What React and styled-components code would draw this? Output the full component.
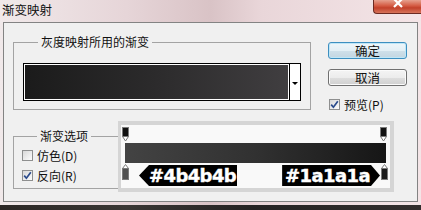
import React from 'react';
import styled, { createGlobalStyle } from 'styled-components';

const Global = createGlobalStyle`
  html, body { margin: 0; padding: 0; background: #2a2a2a; }
  body { font-family: "Noto Sans CJK SC", "Noto Sans", sans-serif; }
  * { box-sizing: border-box; }
`;

const Window = styled.div`
  width: 421px;
  height: 210px;
  overflow: hidden;
  display: flex;
  flex-direction: column;
  background: linear-gradient(90deg, #f1e9ea 0%, #e6d5d8 30%, #d9c3c6 50%, #e9d6d9 62%, #f4e5e7 100%);
`;

const TitleBar = styled.div`
  height: 22px;
  display: flex;
  justify-content: space-between;
  align-items: flex-start;
`;

const TitleText = styled.div`
  padding-left: 2px;
  font-size: 12.5px;
  line-height: 20px;
  color: #111;
`;

const CloseButton = styled.div`
  width: 48px;
  height: 14px;
  border: 1px solid #6c2a22;
  border-top: none;
  border-right: none;
  border-radius: 0 0 0 4px;
  background: linear-gradient(180deg, #e6a08e 0%, #d45a42 45%, #c2412b 60%, #d7735a 100%);
  display: flex;
  justify-content: center;
`;

const Client = styled.div`
  margin: 0 3px;
  height: 180px;
  border: 1px solid #838383;
  background: #f0f0f0;
  padding-left: 9px;
  display: flex;
  flex-direction: column;
`;

const Dark = styled.div`
  margin-top: 3px;
  flex: 1;
  background: linear-gradient(90deg, #2b2624 0%, #3a3533 30%, #242222 60%, #332e2d 100%);
`;

const TopRow = styled.div`
  height: 87px;
  display: flex;
  align-items: flex-start;
`;

const BottomRow = styled.div`
  margin-top: 11px;
  display: flex;
  align-items: flex-start;
`;

const GroupBox = styled.fieldset`
  margin: ${p => p.$top}px 0 0 0;
  width: ${p => p.$w}px;
  height: ${p => p.$h}px;
  padding: ${p => p.$pad};
  border: 1px solid #a3a3a3;
  ${p => p.$openRight && 'border-right: none;'}
  min-width: 0;
`;

const Legend = styled.legend`
  margin-left: 15px;
  padding: 0 3px;
  font-size: 12px;
  line-height: 14px;
  color: #111;
`;

const GradientField = styled.div`
  width: 278px;
  height: 38px;
  border: 1px solid #000;
  background: #fff;
  display: flex;
`;

const GradientFill = styled.div`
  flex: 1;
  margin: 1px;
  background: linear-gradient(90deg, #1b1b1b 0%, #2c2b2c 50%, #403e40 100%);
`;

const DropButton = styled.div`
  width: 11px;
  border-left: 1px solid #000;
  display: flex;
  align-items: center;
  justify-content: center;
  padding-top: 3px;
`;

const Arrow = styled.div`
  width: 0;
  height: 0;
  border-left: 3px solid transparent;
  border-right: 3px solid transparent;
  border-top: 3px solid #000;
`;

const ButtonColumn = styled.div`
  margin: 19px 0 0 17px;
  width: 79px;
  display: flex;
  flex-direction: column;
`;

const Button = styled.div`
  width: 79px;
  height: 17px;
  margin-top: ${p => p.$gap || 0}px;
  border-radius: 3px;
  border: 1px solid ${p => (p.$default ? '#3d8fc0' : '#707070')};
  box-shadow: inset 0 0 0 1px ${p => (p.$default ? '#bfe6f7' : '#fbfbfb')};
  background: ${p =>
    p.$default
      ? 'linear-gradient(180deg, #eef6fa 0%, #e3eff5 50%, #cfe0ea 51%, #c3d6e1 100%)'
      : 'linear-gradient(180deg, #f4f4f4 0%, #ececec 50%, #dedede 51%, #d0d0d0 100%)'};
  font-size: 12.5px;
  line-height: 15px;
  text-align: center;
  color: #111;
`;

const CheckRow = styled.div`
  height: ${p => p.$h || 20}px;
  margin: ${p => p.$m || '0'};
  display: flex;
  align-items: center;
  gap: 4px;
  font-size: 12px;
  color: #111;
`;

const Box = styled.div`
  width: 11px;
  height: 11px;
  border: 1px solid #8e8f8f;
  background: linear-gradient(135deg, #d8d8d8 0%, #eeeeee 60%, #fcfcfc 100%);
  display: flex;
  align-items: center;
  justify-content: center;
  flex: none;
`;

const Editor = styled.div`
  width: 276px;
  height: 71px;
  background: #d5d5d5;
  padding: 4px 4px 4px 3px;
  display: flex;
`;

const EditorInner = styled.div`
  flex: 1;
  background: #f9f9f9;
  display: flex;
  flex-direction: column;
`;

const StopRow = styled.div`
  margin-top: 2px;
  height: 15px;
  padding: 0 2px 0 1px;
  display: flex;
  justify-content: space-between;
  align-items: flex-start;
`;

const Bar = styled.div`
  margin: 1px 4px 0 4px;
  height: 20px;
  background: linear-gradient(90deg, #434343 0%, #313131 50%, #161616 100%);
`;

const LabelRow = styled.div`
  margin-top: 1px;
  height: 23px;
  padding: 0 1px 0 1px;
  display: flex;
  align-items: flex-start;
`;

const Spacer = styled.div`
  flex: 1;
`;

const Label = styled.div`
  margin-top: 1px;
  height: 21px;
  background: #000;
  color: #fff;
  font-family: "DejaVu Sans", sans-serif;
  font-weight: bold;
  font-size: 18px;
  line-height: 21px;
  letter-spacing: -0.6px;
  -webkit-text-stroke: 0.4px #fff;
  white-space: nowrap;
  ${p =>
    p.$dir === 'left'
      ? 'margin-left: 9px; padding: 0 1px 0 10px; clip-path: polygon(10px 0, 100% 0, 100% 100%, 10px 100%, 0 50%);'
      : 'margin-right: 1px; padding: 0 10px 0 3px; clip-path: polygon(0 0, calc(100% - 9px) 0, 100% 50%, calc(100% - 9px) 100%, 0 100%);'}
`;

const TopStop = () => (
  <svg width="8" height="15" viewBox="0 0 8 15">
    <rect x="0.5" y="0.5" width="6" height="9" fill="#111" stroke="#7a7a7a" />
    <polygon points="0.5,9.5 6.5,9.5 3.5,14" fill="#fff" stroke="#7a7a7a" />
  </svg>
);

const BottomStop = ({ color }) => (
  <svg width="8" height="17" viewBox="0 0 8 17">
    <polygon points="3.5,0.5 6.5,4.5 0.5,4.5" fill="#fff" stroke="#7a7a7a" />
    <rect x="0.5" y="4.5" width="6" height="11" fill={color} stroke="#7a7a7a" />
  </svg>
);

const Check = () => (
  <svg width="9" height="9" viewBox="0 0 9 9">
    <path d="M1.2 4.6 L3.4 7.2 L7.8 1.2" fill="none" stroke="#2b4b8c" strokeWidth="1.7" />
  </svg>
);

export default function App() {
  return (
    <>
      <Global />
      <Window>
        <TitleBar>
          <TitleText>渐变映射</TitleText>
          <CloseButton>
            <svg width="14" height="10" viewBox="0 0 14 10">
              <path d="M3 -1 L11 7 M11 -1 L3 7" stroke="#fff" strokeWidth="2.2" />
            </svg>
          </CloseButton>
        </TitleBar>
        <Client>
          <TopRow>
            <GroupBox $top={12} $w={298} $h={75} $pad="14px 8px 8px 9px">
              <Legend>灰度映射所用的渐变</Legend>
              <GradientField>
                <GradientFill />
                <DropButton>
                  <Arrow />
                </DropButton>
              </GradientField>
            </GroupBox>
            <ButtonColumn>
              <Button $default>确定</Button>
              <Button $gap={10}>取消</Button>
              <CheckRow $h={14} $m="11px 0 0 1px">
                <Box>
                  <Check />
                </Box>
                预览(P)
              </CheckRow>
            </ButtonColumn>
          </TopRow>
          <BottomRow>
            <GroupBox $top={8} $w={105} $h={60} $pad="2px 0 0 8px" $openRight>
              <Legend>渐变选项</Legend>
              <CheckRow>
                <Box />
                仿色(D)
              </CheckRow>
              <CheckRow>
                <Box>
                  <Check />
                </Box>
                反向(R)
              </CheckRow>
            </GroupBox>
            <Editor>
              <EditorInner>
                <StopRow>
                  <TopStop />
                  <TopStop />
                </StopRow>
                <Bar />
                <LabelRow>
                  <BottomStop color="#505050" />
                  <Label $dir="left">#4b4b4b</Label>
                  <Spacer />
                  <Label $dir="right">#1a1a1a</Label>
                  <BottomStop color="#1a1a1a" />
                </LabelRow>
              </EditorInner>
            </Editor>
          </BottomRow>
        </Client>
        <Dark />
      </Window>
    </>
  );
}
